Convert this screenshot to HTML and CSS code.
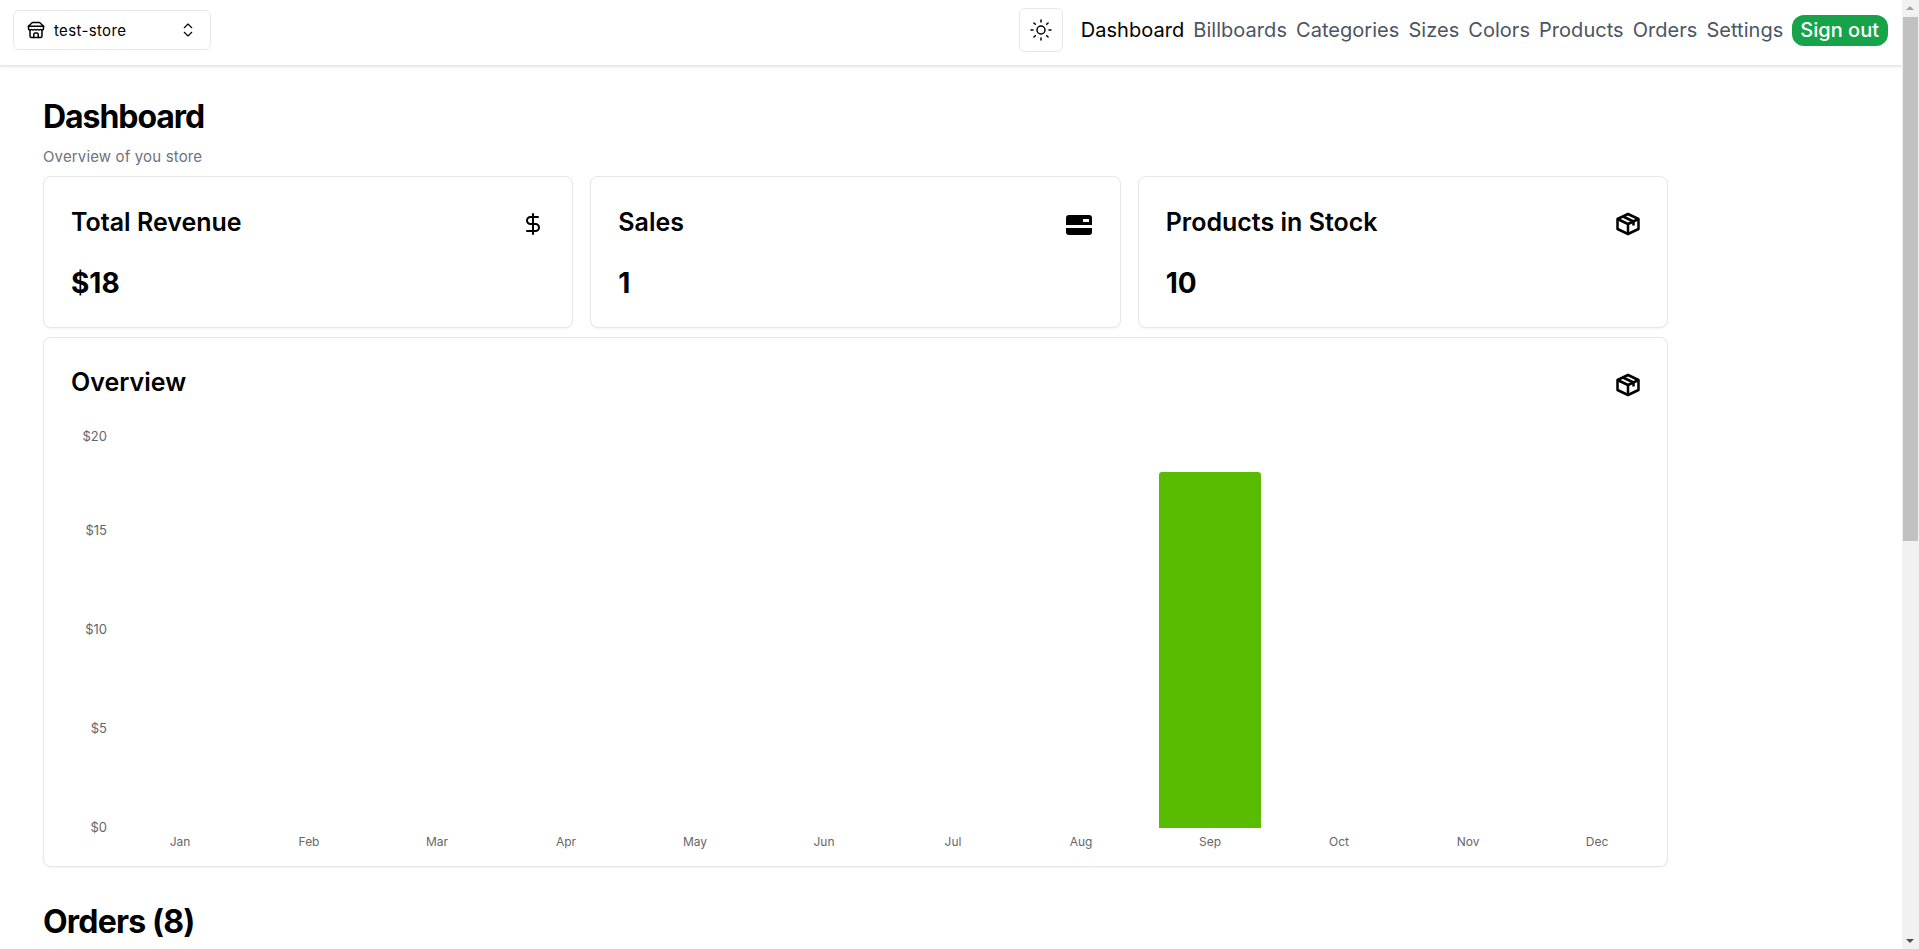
FILE: index.html
```html
<!DOCTYPE html>
<html lang="en">
  <head>
    <meta charset="UTF-8" />
    <meta name="viewport" content="width=device-width, initial-scale=1.0" />
    <title>Dashboard</title>
    <link rel="stylesheet" href="styles.css">
  </head>
  <body>
    <div class="window">
      <div class="page">
        <!-- Top navigation -->
        <header class="navbar">
          <button class="store-switcher" type="button">
            <svg class="icon-store" viewBox="0 0 24 24" fill="none" stroke="currentColor" stroke-width="2" stroke-linecap="round" stroke-linejoin="round">
              <path d="m2 7 4.41-4.41A2 2 0 0 1 7.83 2h8.34a2 2 0 0 1 1.42.59L22 7" />
              <path d="M4 12v8a2 2 0 0 0 2 2h12a2 2 0 0 0 2-2v-8" />
              <path d="M15 22v-4a2 2 0 0 0-2-2h-2a2 2 0 0 0-2 2v4" />
              <path d="M2 7h20" />
              <path d="M22 7v3a2 2 0 0 1-2 2a2.7 2.7 0 0 1-1.59-.63.7.7 0 0 0-.82 0A2.7 2.7 0 0 1 16 12a2.7 2.7 0 0 1-1.59-.63.7.7 0 0 0-.82 0A2.7 2.7 0 0 1 12 12a2.7 2.7 0 0 1-1.59-.63.7.7 0 0 0-.82 0A2.7 2.7 0 0 1 8 12a2.7 2.7 0 0 1-1.59-.63.7.7 0 0 0-.82 0A2.7 2.7 0 0 1 4 12a2 2 0 0 1-2-2V7" />
            </svg>
            <span class="store-name">test-store</span>
            <svg class="icon-chevrons" viewBox="0 0 24 24" fill="none" stroke="currentColor" stroke-width="1.500" stroke-linecap="round" stroke-linejoin="round">
              <path d="m7 15 5 5 5-5" />
              <path d="m7 9 5-5 5 5" />
            </svg>
          </button>

          <div class="nav-right">
            <button class="theme-toggle" type="button">
              <svg class="icon-sun" viewBox="0 0 24 24" fill="none" stroke="currentColor" stroke-width="1.500" stroke-linecap="round" stroke-linejoin="round">
                <circle cx="12" cy="12" r="4" />
                <path d="M12 2v2" />
                <path d="M12 20v2" />
                <path d="m4.93 4.93 1.41 1.41" />
                <path d="m17.66 17.66 1.41 1.41" />
                <path d="M2 12h2" />
                <path d="M20 12h2" />
                <path d="m6.34 17.66-1.41 1.41" />
                <path d="m19.07 4.93-1.41 1.41" />
              </svg>
            </button>
            <nav class="nav-links">
              <a class="nav-link active" href="#">Dashboard</a>
              <a class="nav-link" href="#">Billboards</a>
              <a class="nav-link" href="#">Categories</a>
              <a class="nav-link" href="#">Sizes</a>
              <a class="nav-link" href="#">Colors</a>
              <a class="nav-link" href="#">Products</a>
              <a class="nav-link" href="#">Orders</a>
              <a class="nav-link" href="#">Settings</a>
            </nav>
            <button class="sign-out" type="button">Sign out</button>
          </div>
        </header>

        <main class="content">
          <h1 class="page-title">Dashboard</h1>
          <p class="page-subtitle">Overview of you store</p>

          <!-- Stat cards -->
          <section class="stats">
            <div class="card stat-card">
              <div class="card-head">
                <h3 class="card-title">Total Revenue</h3>
                <svg class="icon-dollar" viewBox="0 0 24 24" fill="none" stroke="currentColor" stroke-width="2" stroke-linecap="round" stroke-linejoin="round">
                  <line x1="12" x2="12" y1="2" y2="22" />
                  <path d="M17 5H9.500a3.500 3.500 0 0 0 0 7h5a3.500 3.500 0 0 1 0 7H6" />
                </svg>
              </div>
              <div class="stat-value">$18</div>
            </div>
            <div class="card stat-card">
              <div class="card-head">
                <h3 class="card-title">Sales</h3>
                <svg class="icon-card" viewBox="0 0 28 22">
                  <path d="M4 1h20a3 3 0 0 1 3 3v7H1V4a3 3 0 0 1 3-3Zm14.500 4a.5.5 0 0 0-.5.5v2a.5.5 0 0 0 .5.5h5a.5.5 0 0 0 .5-.5v-2a.5.5 0 0 0-.5-.5Z" fill-rule="evenodd" />
                  <path d="M1 14h26v4a3 3 0 0 1-3 3H4a3 3 0 0 1-3-3Z" />
                </svg>
              </div>
              <div class="stat-value">1</div>
            </div>
            <div class="card stat-card">
              <div class="card-head">
                <h3 class="card-title">Products in Stock</h3>
                <svg class="icon-box" viewBox="0 0 24 24" fill="none" stroke="currentColor" stroke-width="2.500" stroke-linejoin="round">
                  <path d="M12 2 22.500 7v10L12 22 1.500 17V7Z" />
                  <path d="M1.500 7 12 12l10.500-5" />
                  <path d="M12 12v10" />
                  <path d="m7 4.500 10.500 5v4" />
                </svg>
              </div>
              <div class="stat-value">10</div>
            </div>
          </section>

          <!-- Overview chart -->
          <section class="card overview-card">
            <div class="card-head">
              <h3 class="card-title">Overview</h3>
              <svg class="icon-box" viewBox="0 0 24 24" fill="none" stroke="currentColor" stroke-width="2.500" stroke-linejoin="round">
                <path d="M12 2 22.500 7v10L12 22 1.500 17V7Z" />
                <path d="M1.500 7 12 12l10.500-5" />
                <path d="M12 12v10" />
                <path d="m7 4.500 10.500 5v4" />
              </svg>
            </div>
            <svg class="chart" width="1572" height="460" viewBox="44 400 1572 460">
              <text class="axis-text axis-value" x="107" y="440" text-anchor="end">$20</text>
              <text class="axis-text axis-value" x="107" y="534" text-anchor="end">$15</text>
              <text class="axis-text axis-value" x="107" y="633" text-anchor="end">$10</text>
              <text class="axis-text axis-value" x="107" y="732" text-anchor="end">$5</text>
              <text class="axis-text axis-value" x="107" y="831" text-anchor="end">$0</text>

              <path class="bar" d="M1159 827V474a3 3 0 0 1 3-3h96a3 3 0 0 1 3 3v353Z" />

              <text class="axis-text" x="180" y="845" text-anchor="middle">Jan</text>
              <text class="axis-text" x="309" y="845" text-anchor="middle">Feb</text>
              <text class="axis-text" x="437" y="845" text-anchor="middle">Mar</text>
              <text class="axis-text" x="566" y="845" text-anchor="middle">Apr</text>
              <text class="axis-text" x="695" y="845" text-anchor="middle">May</text>
              <text class="axis-text" x="824" y="845" text-anchor="middle">Jun</text>
              <text class="axis-text" x="953" y="845" text-anchor="middle">Jul</text>
              <text class="axis-text" x="1081" y="845" text-anchor="middle">Aug</text>
              <text class="axis-text" x="1210" y="845" text-anchor="middle">Sep</text>
              <text class="axis-text" x="1339" y="845" text-anchor="middle">Oct</text>
              <text class="axis-text" x="1468" y="845" text-anchor="middle">Nov</text>
              <text class="axis-text" x="1597" y="845" text-anchor="middle">Dec</text>
            </svg>
          </section>

          <h2 class="section-title">Orders (8)</h2>
        </main>
      </div>

      <!-- Browser scrollbar -->
      <div class="scrollbar">
        <div class="scroll-arrow-up"></div>
        <div class="scroll-thumb"></div>
        <div class="scroll-track"></div>
        <div class="scroll-arrow-down"></div>
      </div>
    </div>
  </body>
</html>
```

FILE: styles.css
```css
* {
  box-sizing: border-box;
}
html,
body {
  margin: 0;
  height: 100%;
  overflow: hidden;
}
body {
  font-family: Inter, "Liberation Sans", sans-serif;
  color: #000;
  background: #fff;
}
h1,
h2,
h3,
p {
  margin: 0;
}
button {
  font-family: inherit;
  background: #fff;
  cursor: pointer;
}

.window {
  display: flex;
  height: 949px;
  overflow: hidden;
}
.page {
  flex: 1;
  min-width: 0;
}

/* navbar */
.navbar {
  display: flex;
  align-items: center;
  justify-content: space-between;
  height: 66px;
  padding: 0 14px 5px 13px;
  border-bottom: 1px solid #e5e7eb;
  box-shadow: 0 1px 3px rgba(0, 0, 0, 0.1);
}
.store-switcher {
  display: flex;
  align-items: center;
  width: 198px;
  height: 40px;
  padding: 0 13px 0 13px;
  border: 1px solid #e5e7eb;
  border-radius: 6px;
  color: #000;
  font-size: 15px;
  font-weight: 400;
}
.icon-store {
  width: 18px;
  height: 18px;
  margin-right: 9px;
}
.store-name {
  flex: 1;
  text-align: left;
  letter-spacing: 0.35px;
}
.icon-chevrons {
  width: 18px;
  height: 18px;
}
.nav-right {
  display: flex;
  align-items: center;
}
.theme-toggle {
  display: flex;
  align-items: center;
  justify-content: center;
  width: 44px;
  height: 44px;
  margin-right: 18px;
  padding: 0;
  border: 1px solid #e5e7eb;
  border-radius: 6px;
  color: #000;
}
.icon-sun {
  width: 24px;
  height: 24px;
}
.nav-links {
  display: flex;
  gap: 9px;
  letter-spacing: 0.04px;
}
.nav-link {
  color: #4b5563;
  font-size: 20px;
  font-weight: 400;
  text-decoration: none;
}
.nav-link.active {
  color: #000;
}
.sign-out {
  height: 31px;
  margin-left: 9px;
  padding: 0 9px 0 8px;
  border: none;
  border-radius: 12px;
  background: #16a34a;
  color: #fff;
  font-size: 20px;
  font-weight: 500;
}

/* main content */
.content {
  width: 1668px;
  padding: 33px 0 0 43px;
}
.page-title {
  font-size: 32px;
  font-weight: 700;
  line-height: 36px;
  letter-spacing: -1.05px;
}
.page-subtitle {
  margin-top: 12px;
  color: #6b7280;
  font-size: 15px;
  line-height: 20px;
  letter-spacing: 0.15px;
}
.stats {
  display: grid;
  grid-template-columns: repeat(3, 1fr);
  gap: 17px;
  margin-top: 9px;
}
.card {
  border: 1px solid #e5e7eb;
  border-radius: 8px;
  box-shadow: 0 1px 2px rgba(0, 0, 0, 0.05);
  background: #fff;
}
.stat-card {
  height: 152px;
  padding: 30px 27px 0;
}
.card-head {
  display: flex;
  align-items: center;
  justify-content: space-between;
  height: 32px;
}
.card-title {
  margin-bottom: 2px;
  font-size: 25px;
  font-weight: 600;
  line-height: 32px;
}
.overview-card .card-title {
  margin-bottom: 4px;
}
.stat-value {
  margin-top: 28px;
  font-size: 28px;
  font-weight: 700;
  line-height: 32px;
}
.icon-dollar {
  width: 24px;
  height: 24px;
  margin-top: 2px;
}
.icon-card {
  width: 28px;
  height: 22px;
  margin-top: 4px;
  fill: #000;
}
.icon-box {
  width: 24px;
  height: 24px;
  margin-top: 2px;
}
.overview-card {
  height: 530px;
  margin-top: 9px;
  padding: 30px 27px 0;
}
.chart {
  display: block;
  margin: 1px 0 0 -27px;
}
.axis-text {
  fill: #666;
  font-size: 12px;
}
.axis-value {
  font-size: 13px;
}
.bar {
  fill: #5abc00;
}
.section-title {
  margin-top: 37px;
  font-size: 32px;
  font-weight: 700;
  line-height: 36px;
  letter-spacing: -0.8px;
}

/* scrollbar */
.scrollbar {
  display: flex;
  flex-direction: column;
  flex: none;
  width: 17px;
  background: #f1f1f1;
}
.scroll-arrow-up,
.scroll-arrow-down {
  flex: none;
  height: 17px;
  position: relative;
}
.scroll-arrow-up::after,
.scroll-arrow-down::after {
  content: "";
  position: absolute;
  left: 4px;
  width: 0;
  height: 0;
  border-left: 4px solid transparent;
  border-right: 4px solid transparent;
}
.scroll-arrow-up::after {
  top: 6px;
  border-bottom: 4px solid #a3a3a3;
}
.scroll-arrow-down::after {
  top: 7px;
  border-top: 4px solid #505050;
}
.scroll-thumb {
  flex: none;
  height: 524px;
  margin: 0 1px;
  background: #c1c1c1;
}
.scroll-track {
  flex: 1;
}
```
